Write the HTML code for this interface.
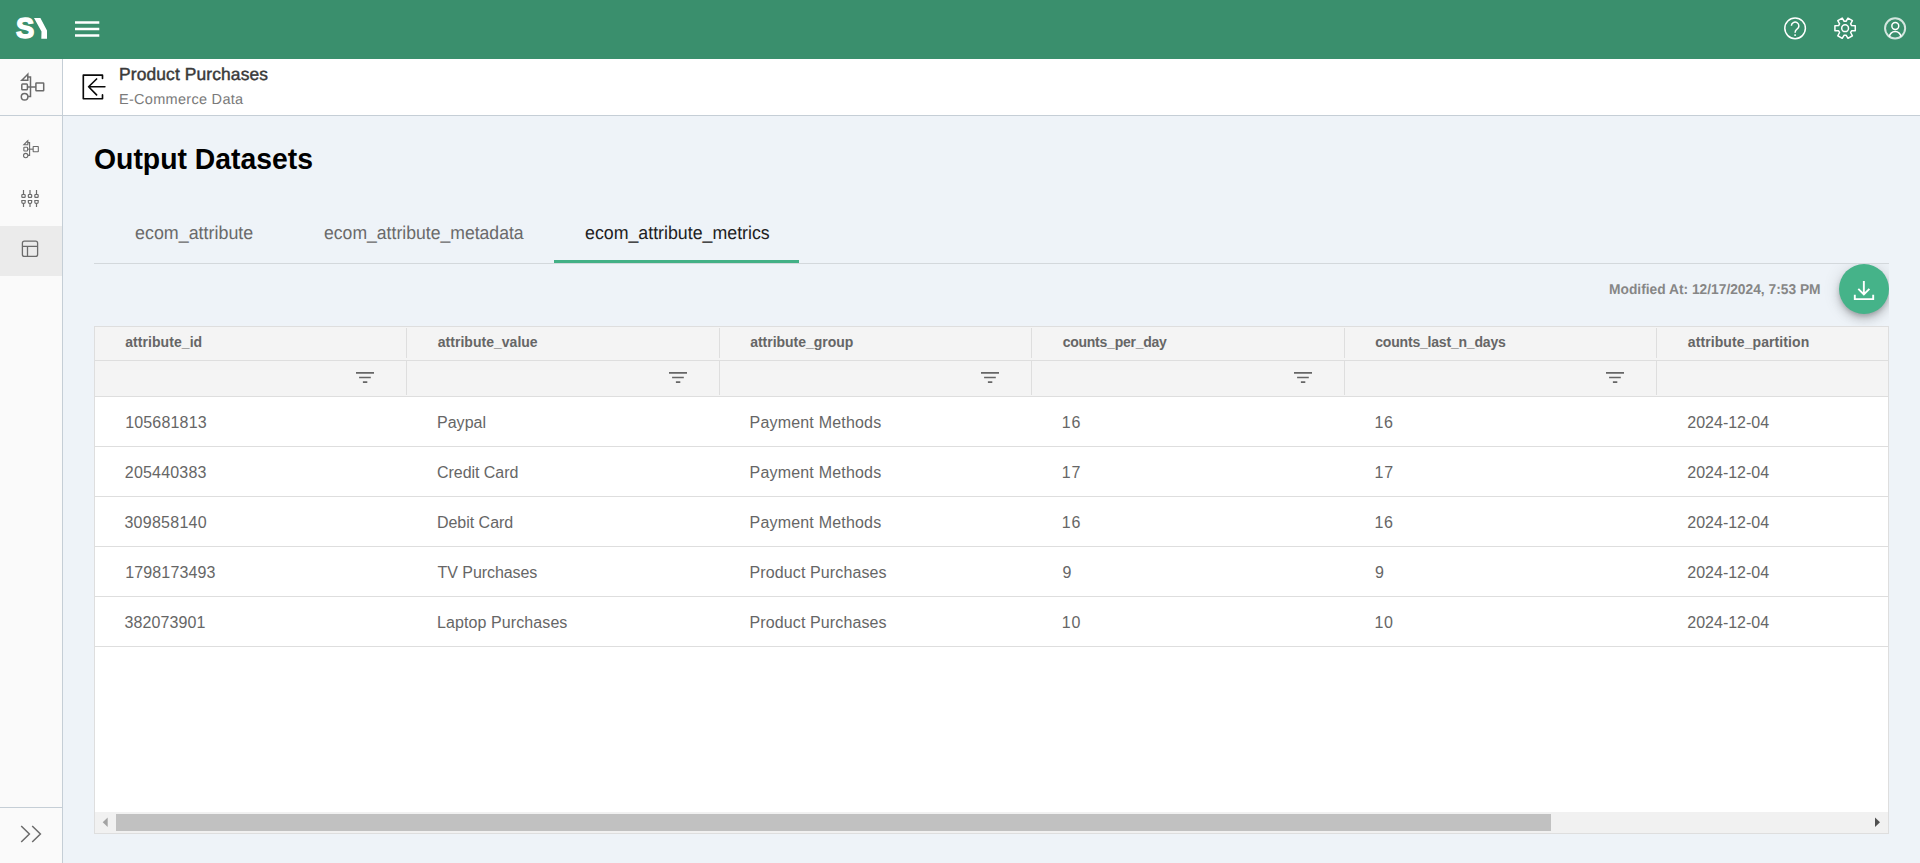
<!DOCTYPE html>
<html lang="en">
<head>
<meta charset="utf-8">
<title>Output Datasets</title>
<style>
*{box-sizing:border-box;margin:0;padding:0}
html,body{width:1920px;height:863px;overflow:hidden}
body{position:relative;background:#eef3f8;font-family:"Liberation Sans",sans-serif;color:#666}
.abs{position:absolute}
.t{position:absolute;white-space:nowrap;line-height:1}
svg{position:absolute;overflow:visible}
#topbar{left:0;top:0;width:1920px;height:59px;background:#3a8f6d}
#logoS{left:16.3px;top:14.0px;font-size:29px;font-weight:bold;color:#fff;transform:scaleX(.945);transform-origin:left top;-webkit-text-stroke:1.4px #fff}
#side{left:0;top:59px;width:63px;height:804px;background:#fafafa;border-right:1px solid #c5ced6}
#sideTop{left:0;top:0;width:62px;height:57px;border-bottom:1px solid #c5ced6}
#sideAct{left:0;top:167px;width:62px;height:50px;background:#ebebeb}
#sideBot{left:0;top:748px;width:62px;height:56px;border-top:1px solid #c5ced6}
#crumb{left:63px;top:59px;width:1857px;height:57px;background:#fff;border-bottom:1px solid #c5ced6}
#c1{left:119px;top:65.6px;font-size:17.4px;color:#3a3a3a;-webkit-text-stroke:0.45px #3a3a3a;text-rendering:geometricPrecision}
#c2{left:119px;top:92.8px;font-size:14.5px;color:#7a7a7a;text-rendering:geometricPrecision}
#title{left:94.2px;top:144.4px;font-size:30px;font-weight:bold;color:#000;transform:scaleX(.9455);transform-origin:left top}
.tab{font-size:18.5px;color:#6a6a6a;top:223.5px;text-rendering:geometricPrecision}
#tabline{left:94px;top:263px;width:1795px;height:1px;background:#d3d8dc}
#tabact{left:554px;top:260px;width:245px;height:3px;background:#42b086}
#mod{left:1608.4px;top:282.9px;font-size:14.2px;font-weight:bold;color:#868686;text-rendering:geometricPrecision}
#fabclip{left:94px;top:264px;width:1795px;height:62px;overflow:hidden}
#fab{left:1745px;top:0px;width:50px;height:50px;border-radius:50%;background:#45b389;box-shadow:0 3px 5px -1px rgba(0,0,0,.2),0 6px 10px 0 rgba(0,0,0,.14),0 1px 18px 0 rgba(0,0,0,.12)}
#tbl{left:94px;top:326px;width:1795px;height:508px;background:#fff;border:1px solid #dedede;overflow:hidden}
#thead{left:0;top:0;width:1793px;height:70px;background:#f4f4f4;border-bottom:1px solid #dedede}
#hline{left:0;top:33px;width:1793px;height:1px;background:#dedede}
.vs{position:absolute;width:1px;background:#dedede}
.h{font-size:14px;font-weight:bold;color:#666;top:8px}
.rl{position:absolute;left:0;width:1793px;height:1px;background:#dedede}
.d{font-size:16px;color:#666}
#sb{left:0;top:485px;width:1793px;height:21px;background:#f1f1f1}
#thumb{left:21px;top:2px;width:1435px;height:17px;background:#c1c1c1}
</style>
</head>
<body>
<div id="topbar" class="abs"><div id="logoS" class="t">S</div><svg width="14" height="22" style="left:34px;top:18px"><polygon points="0,0 6.4,0 13,12.6 13,20.8 7.3,20.8 7.5,13.6" fill="#fff"/></svg><svg width="25" height="18" style="left:75.4px;top:20px"><path d="M0,2.5H24.3M0,9H24.3M0,15.5H24.3" stroke="#fff" stroke-width="2.4" fill="none"/></svg><svg width="24" height="24" style="left:1783px;top:16px" fill="none" stroke="#fff" stroke-width="1.5"><circle cx="12.1" cy="12.35" r="10.3"/><path d="M8.4,9.8a3.75,3.75 0 1 1 5.6,3.3c-1.3,0.8 -1.9,1.6 -1.9,3.7"/><path d="M12.1,18.2v1.7"/></svg><svg width="24" height="24" style="left:1833px;top:16px" fill="none" stroke="#fff" stroke-width="1.5" stroke-linejoin="round"><circle cx="12.1" cy="12.2" r="3.4"/><path d="M13.05,5.26 L14.98,2.10 L19.41,4.66 L17.63,7.91 L18.58,9.56 L22.28,9.64 L22.28,14.76 L18.58,14.84 L17.63,16.49 L19.41,19.74 L14.98,22.30 L13.05,19.14 L11.15,19.14 L9.22,22.30 L4.79,19.74 L6.57,16.49 L5.62,14.84 L1.92,14.76 L1.92,9.64 L5.62,9.56 L6.57,7.91 L4.79,4.66 L9.22,2.10 L11.15,5.26Z"/></svg><svg width="24" height="24" style="left:1883px;top:16px" fill="none" stroke="#fff" stroke-width="1.5"><circle cx="12.1" cy="12.35" r="10.05" stroke-width="2" stroke-opacity=".78"/><circle cx="12.3" cy="10.05" r="3.45"/><path d="M6.4,20.7a5.7,5.05 0 0 1 11.5,0"/></svg></div>
<div id="side" class="abs"><div id="sideTop" class="abs"></div><div id="sideAct" class="abs"></div><div id="sideBot" class="abs"></div><svg width="62" height="804" style="left:0;top:0"><g fill="none" stroke="#6b6b6b" stroke-width="1.50" stroke-linejoin="miter"><path d="M27.80,15.20 L21.80,21.30 L27.80,21.30 Z"/><path d="M27.80,18.10 H30.50 V37.40 H28.10"/><rect x="21.80" y="25.10" width="5.60" height="5.60" rx="0.80"/><path d="M27.40,28.00 H35.90"/><rect x="35.90" y="24.00" width="7.80" height="7.80" rx="0.50"/><circle cx="24.60" cy="37.70" r="3.30"/></g><g fill="none" stroke="#6b6b6b" stroke-width="1.10" stroke-linejoin="miter"><path d="M27.81,81.72 L23.85,85.75 L27.81,85.75 Z"/><path d="M27.81,83.63 H29.60 V96.37 H28.01"/><rect x="23.85" y="88.25" width="3.70" height="3.70" rx="0.53"/><path d="M27.55,90.17 H33.16"/><rect x="33.16" y="87.53" width="5.15" height="5.15" rx="0.33"/><circle cx="25.70" cy="96.57" r="2.18"/></g><g fill="none" stroke="#6b6b6b" stroke-width="1.2"><path d="M23.5,131.0V135.3M23.5,144.4V148.0"/><rect x="21.85" y="135.50" width="3.3" height="2.9" rx="0.6"/><path d="M21.85,141.50H25.15V143.30Q25.15,144.40 24.00,144.40H23.00Q21.85,144.40 21.85,143.30Z"/><path d="M30.0,131.0V135.3M30.0,144.4V148.0"/><rect x="28.35" y="135.50" width="3.3" height="2.9" rx="0.6"/><path d="M28.35,141.50H31.65V143.30Q31.65,144.40 30.50,144.40H29.50Q28.35,144.40 28.35,143.30Z"/><path d="M36.5,131.0V135.3M36.5,144.4V148.0"/><rect x="34.85" y="135.50" width="3.3" height="2.9" rx="0.6"/><path d="M34.85,141.50H38.15V143.30Q38.15,144.40 37.00,144.40H36.00Q34.85,144.40 34.85,143.30Z"/></g><g fill="none" stroke="#6b6b6b" stroke-width="1.3"><rect x="22.4" y="182.2" width="15.2" height="15.2" rx="2"/><path d="M22.4,187.4H37.6M27.5,187.4V197.4"/></g><g fill="none" stroke="#6b6b6b" stroke-width="1.5"><path d="M21.2,767.0L29.4,775.0L21.2,783.0"/><path d="M32.2,767.0L40.4,775.0L32.2,783.0"/></g></svg></div>
<div id="crumb" class="abs"></div><svg width="26" height="28" style="left:82px;top:73px" fill="none" stroke="#0a0a0a" stroke-width="1.65" stroke-linecap="round" stroke-linejoin="round"><path d="M20.5,5.4V2.15H1.3V25.75H20.5V21.9"/><path d="M22.9,13.75H6.6M14.6,6.0L6.6,13.75L14.6,21.8"/></svg><div id="c1" class="t" style="margin-left:0.09px;letter-spacing:0.122px;">Product Purchases</div><div id="c2" class="t" style="margin-left:-0.04px;letter-spacing:0.293px;">E-Commerce Data</div>
<div id="title" class="t">Output Datasets</div>
<div class="t tab" style="left:135.32px;transform:scale(0.9662,1.0000);transform-origin:left top;">ecom_attribute</div><div class="t tab" style="left:323.95px;transform:scale(0.9514,1.0000);transform-origin:left top;">ecom_attribute_metadata</div><div class="t tab" style="left:584.55px;color:#212121;transform:scale(0.9608,1.0000);transform-origin:left top;">ecom_attribute_metrics</div><div id="tabline" class="abs"></div><div id="tabact" class="abs"></div>
<div id="mod" class="t" style="margin-left:0.89px;transform:scale(0.9711,1.0000);transform-origin:left top;">Modified At: 12/17/2024, 7:53 PM</div><div id="fabclip" class="abs"><div id="fab" class="abs"><svg width="50" height="50" style="left:0;top:0" fill="none" stroke="#fff" stroke-width="1.9"><path d="M24.85,17.0V30.2M19.3,24.9L24.85,30.4L30.4,24.9M15.8,30.8V35.1H34.2V30.8"/></svg></div></div>
<div id="tbl" class="abs"><div id="thead" class="abs"></div><div id="hline" class="abs"></div><div class="t h" style="left:30.20px;letter-spacing:0.067px;">attribute_id</div><svg width="20" height="14" style="left:261.2px;top:43px"><path d="M0,2.85H18M3.1,7.45H14.8M6.9,12.1H11.3" stroke="#666" stroke-width="1.55" fill="none"/></svg><div class="t h" style="left:342.82px;letter-spacing:0.018px;">attribute_value</div><div class="vs" style="left:311px;top:1px;height:30px"></div><div class="vs" style="left:311px;top:34px;height:34px"></div><svg width="20" height="14" style="left:573.7px;top:43px"><path d="M0,2.85H18M3.1,7.45H14.8M6.9,12.1H11.3" stroke="#666" stroke-width="1.55" fill="none"/></svg><div class="t h" style="left:655.20px;letter-spacing:-0.017px;">attribute_group</div><div class="vs" style="left:624px;top:1px;height:30px"></div><div class="vs" style="left:624px;top:34px;height:34px"></div><svg width="20" height="14" style="left:886.2px;top:43px"><path d="M0,2.85H18M3.1,7.45H14.8M6.9,12.1H11.3" stroke="#666" stroke-width="1.55" fill="none"/></svg><div class="t h" style="left:967.64px;letter-spacing:-0.239px;">counts_per_day</div><div class="vs" style="left:936px;top:1px;height:30px"></div><div class="vs" style="left:936px;top:34px;height:34px"></div><svg width="20" height="14" style="left:1198.7px;top:43px"><path d="M0,2.85H18M3.1,7.45H14.8M6.9,12.1H11.3" stroke="#666" stroke-width="1.55" fill="none"/></svg><div class="t h" style="left:1280.29px;letter-spacing:-0.198px;">counts_last_n_days</div><div class="vs" style="left:1249px;top:1px;height:30px"></div><div class="vs" style="left:1249px;top:34px;height:34px"></div><svg width="20" height="14" style="left:1511.2px;top:43px"><path d="M0,2.85H18M3.1,7.45H14.8M6.9,12.1H11.3" stroke="#666" stroke-width="1.55" fill="none"/></svg><div class="t h" style="left:1592.82px;letter-spacing:0.093px;">attribute_partition</div><div class="vs" style="left:1561px;top:1px;height:30px"></div><div class="vs" style="left:1561px;top:34px;height:34px"></div><div class="t d" style="left:30.13px;top:87.5px;letter-spacing:0.183px;">105681813</div><div class="t d" style="left:341.96px;top:87.5px;letter-spacing:0.049px;">Paypal</div><div class="t d" style="left:654.52px;top:87.5px;letter-spacing:0.193px;">Payment Methods</div><div class="t d" style="left:966.83px;top:87.5px;letter-spacing:0.774px;">16</div><div class="t d" style="left:1279.52px;top:87.5px;letter-spacing:0.665px;">16</div><div class="t d" style="left:1592.36px;top:87.5px;letter-spacing:-0.016px;">2024-12-04</div><div class="rl" style="top:119px"></div><div class="t d" style="left:29.82px;top:137.5px;letter-spacing:0.193px;">205440383</div><div class="t d" style="left:342.10px;top:137.5px;letter-spacing:-0.054px;">Credit Card</div><div class="t d" style="left:654.52px;top:137.5px;letter-spacing:0.193px;">Payment Methods</div><div class="t d" style="left:966.83px;top:137.5px;letter-spacing:0.874px;">17</div><div class="t d" style="left:1279.52px;top:137.5px;letter-spacing:0.848px;">17</div><div class="t d" style="left:1592.36px;top:137.5px;letter-spacing:-0.016px;">2024-12-04</div><div class="rl" style="top:169px"></div><div class="t d" style="left:29.47px;top:187.5px;letter-spacing:0.254px;">309858140</div><div class="t d" style="left:341.96px;top:187.5px;letter-spacing:-0.024px;">Debit Card</div><div class="t d" style="left:654.52px;top:187.5px;letter-spacing:0.193px;">Payment Methods</div><div class="t d" style="left:966.83px;top:187.5px;letter-spacing:0.774px;">16</div><div class="t d" style="left:1279.52px;top:187.5px;letter-spacing:0.665px;">16</div><div class="t d" style="left:1592.36px;top:187.5px;letter-spacing:-0.016px;">2024-12-04</div><div class="rl" style="top:219px"></div><div class="t d" style="left:30.13px;top:237.5px;letter-spacing:0.156px;">1798173493</div><div class="t d" style="left:342.60px;top:237.5px;letter-spacing:-0.064px;">TV Purchases</div><div class="t d" style="left:654.52px;top:237.5px;letter-spacing:0.117px;">Product Purchases</div><div class="t d" style="left:967.44px;top:237.5px;">9</div><div class="t d" style="left:1279.88px;top:237.5px;">9</div><div class="t d" style="left:1592.36px;top:237.5px;letter-spacing:-0.016px;">2024-12-04</div><div class="rl" style="top:269px"></div><div class="t d" style="left:29.47px;top:287.5px;letter-spacing:0.100px;">382073901</div><div class="t d" style="left:341.96px;top:287.5px;letter-spacing:0.096px;">Laptop Purchases</div><div class="t d" style="left:654.52px;top:287.5px;letter-spacing:0.117px;">Product Purchases</div><div class="t d" style="left:966.83px;top:287.5px;letter-spacing:0.670px;">10</div><div class="t d" style="left:1279.52px;top:287.5px;letter-spacing:0.650px;">10</div><div class="t d" style="left:1592.36px;top:287.5px;letter-spacing:-0.016px;">2024-12-04</div><div class="rl" style="top:319px"></div><div id="sb" class="abs"><div id="thumb" class="abs"></div><svg width="1793" height="21" style="left:0;top:0"><polygon points="7.7,10.3 12.7,5.6 12.7,15" fill="#a3a3a3"/><polygon points="1785,10.2 1780,5.5 1780,15" fill="#505050"/></svg></div></div>
</body>
</html>
